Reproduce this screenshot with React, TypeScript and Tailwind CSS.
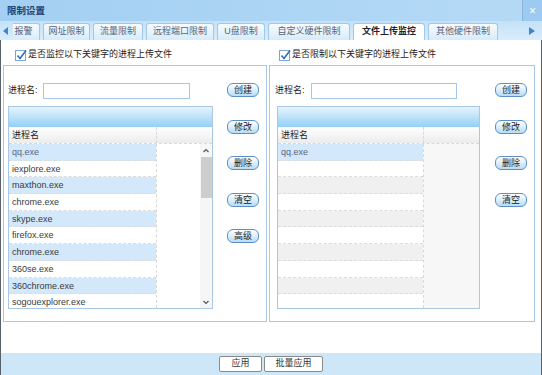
import React from "react";

const tabs = [
  { label: "报警", w: "w-[33px]" },
  { label: "网址限制", w: "w-[47px]" },
  { label: "流量限制", w: "w-[50px]" },
  { label: "远程端口限制", w: "w-[68px]" },
  { label: "U盘限制", w: "w-[48px]" },
  { label: "自定义硬件限制", w: "w-[82px]" },
  { label: "文件上传监控", w: "w-[72px]", active: true },
  { label: "其他硬件限制", w: "w-[70px]" },
];

const leftRows = [
  "qq.exe",
  "iexplore.exe",
  "maxthon.exe",
  "chrome.exe",
  "skype.exe",
  "firefox.exe",
  "chrome.exe",
  "360se.exe",
  "360chrome.exe",
  "sogouexplorer.exe",
];

const rightRows = ["qq.exe", "", "", "", "", "", "", "", "", ""];

function CheckBox() {
  return (
    <svg width="12" height="12" viewBox="0 0 12 12" className="shrink-0">
      <rect x="0.5" y="1.5" width="10" height="10" fill="#fff" stroke="#7fa6d3" />
      <path d="M2.5 6.5 L5 9.5 L11 1.5" fill="none" stroke="#2d6fc4" strokeWidth="1.6" />
    </svg>
  );
}

function SmallButton({ label }: { label: string }) {
  return (
    <button className="w-[32px] h-[14px] rounded-[6px] border border-[#5d8fc7] bg-gradient-to-b from-white to-[#b7ddf7] text-[9px] leading-[12px] text-[#1b1b1b] p-0">
      {label}
    </button>
  );
}

function ProcTable({ rows, side }: { rows: string[]; side: "left" | "right" }) {
  const left = side === "left";
  return (
    <div className={`${left ? "w-[205px]" : "w-[203px] ml-[2px]"} mt-[7px] border border-[#a9c8e8] bg-white`}>
      <div className="h-[20px] bg-gradient-to-b from-[#e4f4fe] to-[#93d0f4]" />
      <div className="flex h-[17px] bg-gradient-to-b from-white to-[#ececec] border-b border-dashed border-[#d8d8d8]">
        <div className={`${left ? "w-[148px]" : "w-[146px]"} border-r border-dashed border-[#d8d8d8] pl-[3px] text-[9px] leading-[17px] text-[#222]`}>
          进程名
        </div>
        <div className="flex-1" />
      </div>
      <div className="flex h-[164px] overflow-hidden">
        <div className={`${left ? "w-[148px]" : "w-[146px]"} border-r border-dashed border-[#d8d8d8]`}>
          {rows.map((r, i) => {
            let bg = "bg-white";
            if (left) bg = i % 2 === 0 ? "bg-[#d4e8fc]" : "bg-white";
            else if (i === 0) bg = "bg-[#d4e8fc]";
            else if (i % 2 === 0) bg = "bg-[#f0f0f0]";
            return (
              <div
                key={i}
                className={`h-[16.7px] ${bg} border-b border-dashed border-[#dcdcdc] pl-[3px] text-[9px] leading-[16px] ${i === 0 ? "text-[#56667e]" : "text-[#3a3a3a]"}`}
              >
                {r}
              </div>
            );
          })}
        </div>
        {left ? (
          <div className="flex-1 flex justify-end bg-white">
            <div className="w-[12px] h-full flex flex-col items-center bg-[#f6f6f6]">
              <svg width="8" height="8" viewBox="0 0 8 8" className="mt-[3px]">
                <path d="M1.5 5 L4 2.5 L6.5 5" fill="none" stroke="#555" strokeWidth="1.2" />
              </svg>
              <div className="w-[11px] h-[41px] mt-[2px] bg-[#cdcdcd]" />
              <div className="flex-1" />
              <svg width="8" height="8" viewBox="0 0 8 8" className="mb-[2px]">
                <path d="M1.5 3 L4 5.5 L6.5 3" fill="none" stroke="#555" strokeWidth="1.2" />
              </svg>
            </div>
          </div>
        ) : (
          <div className="flex-1 bg-[#f7f7f7]" />
        )}
      </div>
    </div>
  );
}

function Panel({ side }: { side: "left" | "right" }) {
  const left = side === "left";
  const rows = left ? leftRows : rightRows;
  return (
    <div className={`${left ? "w-[264px] pl-[4px]" : "w-[266px] pl-[5px]"} h-[257px] border border-[#a9c8e8] flex pt-[17px]`}>
      <div className="flex flex-col">
        <div className="flex items-center h-[16px]">
          <span className={`${left ? "w-[35px]" : "w-[36px]"} text-[9px] text-[#222]`}>进程名:</span>
          <div className={`${left ? "w-[147px]" : "w-[146px]"} h-[16px] border border-[#a9c8e8] bg-white`} />
        </div>
        <ProcTable rows={rows} side={side} />
      </div>
      <div className={`flex flex-col gap-[22.5px] ${left ? "ml-[14px]" : "ml-[15px]"}`}>
        <SmallButton label="创建" />
        <SmallButton label="修改" />
        <SmallButton label="删除" />
        <SmallButton label="清空" />
        {left && <SmallButton label="高级" />}
      </div>
    </div>
  );
}

export default function App() {
  return (
    <div
      className="w-[542px] h-[375px] flex flex-col bg-white overflow-hidden"
      style={{ fontFamily: '"Liberation Sans", "Noto Sans CJK SC", sans-serif' }}
    >
      {/* title bar */}
      <div className="h-[21px] flex bg-gradient-to-r from-[#a3cff2] to-[#b5daf6]">
        <div className="flex-1 pl-[7px] text-[9.5px] font-bold leading-[21px] text-[#1f3f6e]">限制设置</div>
        <div className="w-[20px] border-l border-[#86b6de] bg-[#9ccaf0] flex items-center justify-center text-white text-[12px] leading-none">
          ×
        </div>
      </div>

      {/* tabs */}
      <div className="h-[19px] flex items-end bg-gradient-to-b from-[#c4e1f7] to-[#d9edfb] relative">
        <div className="w-[13px] h-full flex items-center pl-[3px]">
          <svg width="6" height="8" viewBox="0 0 6 8">
            <path d="M5 0 L0 4 L5 8 Z" fill="#3f86cf" />
          </svg>
        </div>
        <div className="w-[509px] h-[17px] overflow-hidden">
          <div className="flex gap-[3px] ml-[-6px] h-full">
            {tabs.map((t) => (
              <div
                key={t.label}
                className={`${t.w} shrink-0 h-full rounded-t-[3px] border border-b-0 border-[#a2c8e8] flex items-center justify-center text-[9px] ${
                  t.active ? "bg-white font-bold text-[#1b2430]" : "bg-gradient-to-b from-[#f6fbff] to-[#d7ebfa] text-[#55657a]"
                }`}
              >
                {t.label}
              </div>
            ))}
          </div>
        </div>
        <div className="flex-1 h-full flex items-center justify-center">
          <svg width="6" height="8" viewBox="0 0 6 8">
            <path d="M0 0 L6 4 L0 8 Z" fill="#3f86cf" />
          </svg>
        </div>
      </div>

      {/* content */}
      <div className="flex-1 border-x border-[#59616b] pl-[2px] pt-[8px] flex gap-[2px]">
        <div className="flex flex-col gap-[3px]">
          <div className="h-[14px] flex items-center gap-[1px] pl-[12px] text-[9px] text-[#222]">
            <CheckBox />
            <span>是否监控以下关键字的进程上传文件</span>
          </div>
          <Panel side="left" />
        </div>
        <div className="flex flex-col gap-[3px]">
          <div className="h-[14px] flex items-center gap-[1px] pl-[10px] text-[9px] text-[#222]">
            <CheckBox />
            <span>是否限制以下关键字的进程上传文件</span>
          </div>
          <Panel side="right" />
        </div>
      </div>

      {/* footer */}
      <div className="h-[22px] border-x border-[#59616b] bg-[#cde7f8] flex items-center justify-center gap-[2px]">
        <button className="w-[43px] h-[16px] rounded-[2px] border border-[#8a8a8a] bg-white text-[9px] text-[#333] p-0">
          应用
        </button>
        <button className="w-[59px] h-[16px] rounded-[2px] border border-[#8a8a8a] bg-white text-[9px] text-[#333] p-0">
          批量应用
        </button>
      </div>
    </div>
  );
}
